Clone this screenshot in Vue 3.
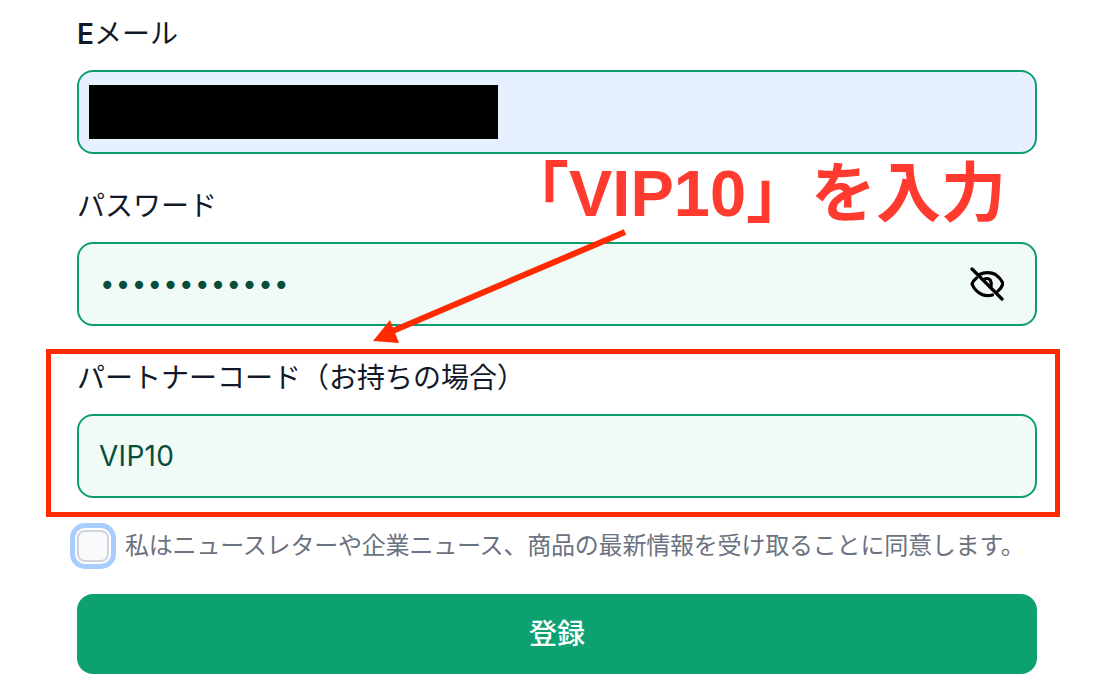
<script setup>
// 登録フォーム + 注釈
const password = '••••••••••••'
const partnerCode = 'VIP10'
</script>

<template>
  <div class="page">
    <form class="signup-form" @submit.prevent>
      <div class="field">
        <label class="field-label"><b>E</b>メール</label>
        <div class="input-box email">
          <div class="redacted"></div>
        </div>
      </div>

      <div class="field">
        <label class="field-label">パスワード</label>
        <div class="input-box">
          <span class="dots">{{ password }}</span>
          <svg class="eye" width="34" height="34" viewBox="0 0 34 34" fill="none" stroke="#000" stroke-width="3.2" stroke-linecap="round" stroke-linejoin="round">
            <path d="M2 2 L32 32" />
            <path d="M9.5 7.5 C14 5 21 5 25.5 7.5 C29 10 31.5 13 33 16.5 C32 19.5 30.5 22 28 24" />
            <path d="M6.5 11 C4.5 12.5 3 14.5 2 17 C4 22 7.5 25.5 12 27.5 C15.5 29 19 29 22.5 28" />
            <path d="M14 12.5 C16 11 19 11.5 20.5 13.5 C21.5 15.5 21.5 17.5 21 19.5" />
          </svg>
        </div>
      </div>

      <div class="field partner">
        <label class="field-label">パートナーコード（お持ちの場合）</label>
        <div class="input-box">
          <span class="code">{{ partnerCode }}</span>
        </div>
        <!-- 赤枠 -->
        <div class="highlight"></div>
      </div>

      <div class="consent">
        <span class="checkbox"></span>
        <span class="consent-text">私はニュースレターや企業ニュース、商品の最新情報を受け取ることに同意します。</span>
      </div>

      <button class="submit-btn" type="submit">登録</button>
    </form>

    <!-- 注釈 -->
    <div class="callout">「VIP10」を入力</div>
    <svg class="arrow" width="1120" height="700" viewBox="0 0 1120 700">
      <path d="M625 232 L388 333" stroke="#ff2a00" stroke-width="6" fill="none" />
      <path d="M373 341 L390 320 L399 343 Z" fill="#ff2a00" />
    </svg>
  </div>
</template>

<style>
html, body {
  margin: 0;
  background: #fff;
}
</style>

<style scoped>
.page {
  position: relative;
  width: 1120px;
  height: 700px;
  overflow: hidden;
  font-family: Inter, "Noto Sans CJK JP", sans-serif;
}

.signup-form {
  width: 960px;
  padding: 15px 0 0 77px;
}

.field {
  position: relative;
  margin-bottom: 33px;
}

.field.partner {
  margin-bottom: 32px;
}

.field-label {
  display: block;
  height: 36px;
  line-height: 38px;
  margin-bottom: 19px;
  font-size: 28px;
  color: #111827;
}

.field-label b {
  font-weight: 600;
}

.input-box {
  box-sizing: border-box;
  display: flex;
  align-items: center;
  justify-content: space-between;
  height: 84px;
  padding: 0 31px 0 20px;
  background: #f0faf6;
  border: 2px solid #0f9d6e;
  border-radius: 16px;
  color: #064e3b;
}

.input-box.email {
  padding-left: 10px;
  background: #e6f0fe;
}

.redacted {
  width: 409px;
  height: 54px;
  background: #000;
}

.dots {
  margin-top: 3px;
  font-family: "DejaVu Sans", sans-serif;
  font-size: 28px;
  letter-spacing: -0.7px;
}

.code {
  font-size: 28px;
  line-height: 36px;
  letter-spacing: 0.3px;
}

.highlight {
  position: absolute;
  left: -31px;
  top: -10px;
  width: 1014px;
  height: 168px;
  box-sizing: border-box;
  border: 5px solid #ff2a00;
  pointer-events: none;
}

.consent {
  display: flex;
  align-items: center;
  gap: 16px;
  height: 32px;
}

.checkbox {
  flex: none;
  box-sizing: border-box;
  width: 32px;
  height: 32px;
  background: #f9fafb;
  border: 2px solid #d1d5db;
  border-radius: 8px;
  box-shadow: 0 0 0 2px #fff, 0 0 0 7px #a9cdff;
}

.consent-text {
  margin-bottom: 5px;
  font-size: 24px;
  letter-spacing: -0.2px;
  white-space: nowrap;
  color: #6b7280;
}

.submit-btn {
  display: block;
  width: 100%;
  height: 80px;
  margin-top: 32px;
  padding: 0 0 4px;
  background: #0ca16f;
  border: none;
  border-radius: 16px;
  color: #fff;
  font-family: inherit;
  font-size: 28px;
  font-weight: 500;
}

.callout {
  position: absolute;
  left: 504px;
  top: 154px;
  font-family: "Liberation Sans", "Noto Sans CJK JP", sans-serif;
  font-size: 65px;
  line-height: 80px;
  font-weight: 700;
  white-space: nowrap;
  color: #ff3b30;
}

.arrow {
  position: absolute;
  left: 0;
  top: 0;
  pointer-events: none;
}
</style>
